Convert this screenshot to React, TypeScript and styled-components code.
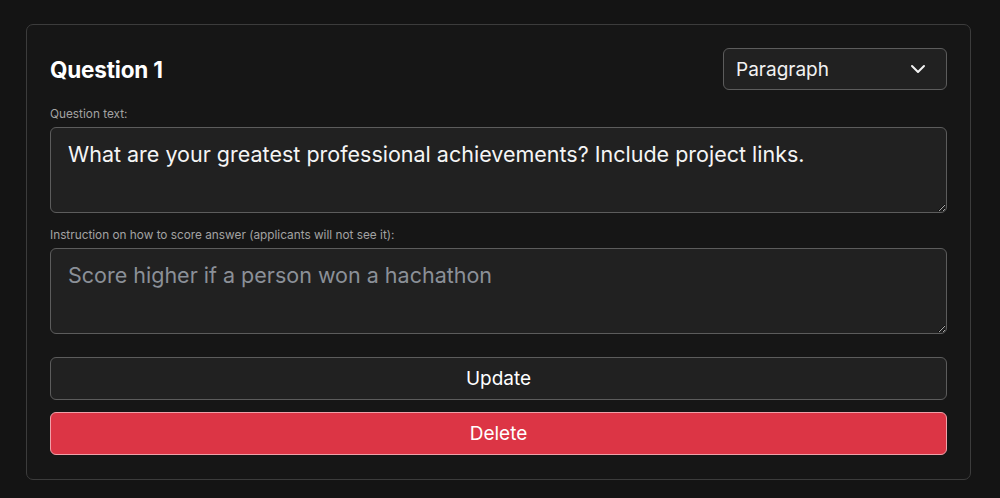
import styled, { createGlobalStyle } from "styled-components";

const GlobalStyle = createGlobalStyle`
  html, body {
    margin: 0;
    padding: 0;
    background: #141414;
    font-family: Inter, "Noto Sans", sans-serif;
    color: #fff;
  }
`;

const Page = styled.div`
  padding: 24px 29px 20px 26px;
`;

const Card = styled.div`
  background: #161616;
  border: 1px solid #3c3c3c;
  border-radius: 7px;
  padding: 23px 23px 24px 23px;
  display: flex;
  flex-direction: column;
`;

const Header = styled.div`
  display: flex;
  justify-content: space-between;
  align-items: center;
  margin-bottom: 17px;
`;

const Title = styled.h2`
  margin: 0;
  font-size: 22.5px;
  font-weight: 700;
  letter-spacing: -0.2px;
`;

const Select = styled.div`
  width: 224px;
  height: 42px;
  box-sizing: border-box;
  border: 1px solid #5c5c5c;
  border-radius: 6px;
  background: #212121;
  display: flex;
  align-items: center;
  justify-content: space-between;
  padding: 0 20px 0 12px;
  font-size: 19px;
  color: #f2f2f2;
`;

const Label = styled.label`
  display: block;
  font-size: 11.8px;
  line-height: 15px;
  color: #a3a3a3;
  margin-bottom: 5px;
`;

const Area = styled.textarea<{ $gap: number }>`
  display: block;
  width: 100%;
  height: 86px;
  box-sizing: border-box;
  background: #212121;
  border: 1px solid #5c5c5c;
  border-radius: 6px;
  padding: 14px 17px;
  font-family: Inter, "Noto Sans", sans-serif;
  font-size: 21.5px;
  line-height: 25px;
  color: #f5f5f5;
  margin-bottom: ${(p) => p.$gap}px;
  resize: vertical;
  outline: none;
  &::placeholder {
    color: #8b9098;
  }
`;

const Button = styled.button<{ $danger?: boolean }>`
  width: 100%;
  height: 43px;
  border-radius: 6px;
  border: 1px solid ${(p) => (p.$danger ? "#f0a0a8" : "#5c5c5c")};
  background: ${(p) => (p.$danger ? "#dc3545" : "#212121")};
  color: #fff;
  font-family: Inter, "Noto Sans", sans-serif;
  font-size: 19px;
  cursor: pointer;
  & + & {
    margin-top: 12px;
  }
`;

function App() {
  return (
    <Page>
      <GlobalStyle />
      <Card>
        <Header>
          <Title>Question 1</Title>
          <Select>
            <span>Paragraph</span>
            <svg width="16" height="10" viewBox="0 0 16 10" fill="none">
              <path d="M2 2l6 6 6-6" stroke="#f2f2f2" strokeWidth="2" strokeLinecap="round" strokeLinejoin="round" />
            </svg>
          </Select>
        </Header>
        <Label>Question text:</Label>
        <Area
          $gap={15}
          defaultValue="What are your greatest professional achievements? Include project links."
        />
        <Label>Instruction on how to score answer (applicants will not see it):</Label>
        <Area $gap={23} placeholder="Score higher if a person won a hachathon" />
        <Button>Update</Button>
        <Button $danger>Delete</Button>
      </Card>
    </Page>
  );
}

export default App;
